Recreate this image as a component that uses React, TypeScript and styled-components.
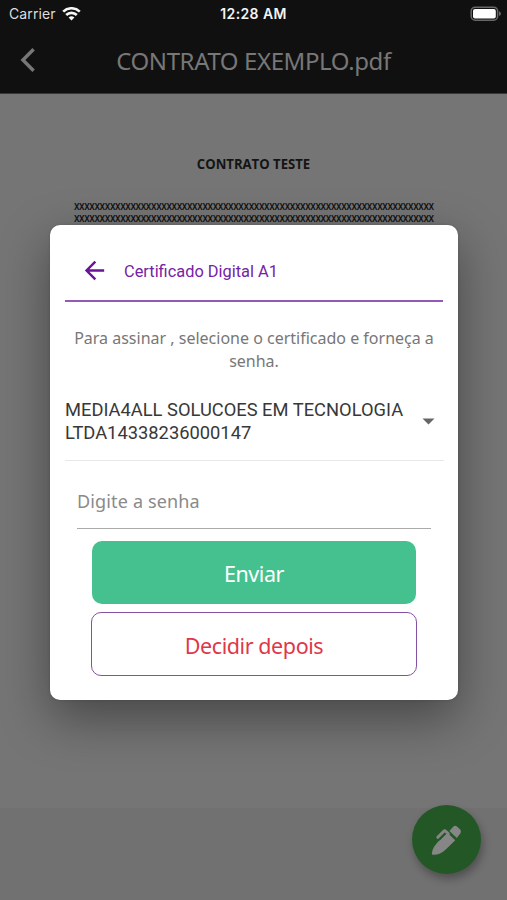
import React from "react";
import styled, { createGlobalStyle } from "styled-components";

const Global = createGlobalStyle`
  * { box-sizing: border-box; }
  body { margin: 0; background: #757575; }
  p, h1, h2 { margin: 0; font-weight: 400; }
  button { font: inherit; padding: 0; border: 0; background: none; }
`;

const humanist = '"Noto Sans", "Open Sans", sans-serif';

const Screen = styled.div`
  position: relative;
  width: 507px;
  height: 900px;
  overflow: hidden;
  display: flex;
  flex-direction: column;
  background: #757575;
  font-family: ${humanist};
`;

const TopBar = styled.header`
  flex: none;
  height: 94px;
  background: #101010;
  border-bottom: 1px solid #383838;
`;

const StatusBar = styled.div`
  display: grid;
  grid-template-columns: 1fr auto 1fr;
  align-items: center;
  height: 28px;
  padding: 0 6px 0 9px;
  color: #f4f4f4;
  font: 400 14px/28px Inter, sans-serif;
`;

const Carrier = styled.div`
  display: flex;
  align-items: center;
  gap: 6px;
  color: #dedede;
  letter-spacing: 0.1px;
`;

const Clock = styled.div`
  margin-right: 3px;
  font-weight: 600;
  font-size: 14px;
  letter-spacing: 0.4px;
`;

const BatterySlot = styled.div`
  display: flex;
  justify-content: flex-end;
`;

const NavBar = styled.div`
  display: grid;
  grid-template-columns: 60px 1fr 60px;
  align-items: center;
  height: 64px;
`;

const BackButton = styled.button`
  display: flex;
  padding-left: 18px;
  color: #777;
`;

const NavTitle = styled.h1`
  padding-top: 2px;
  color: #777;
  font-size: 24px;
  line-height: 34px;
  letter-spacing: -0.4px;
  text-align: center;
  white-space: nowrap;
`;

const Page = styled.main`
  flex: none;
  height: 714px;
  padding-top: 61px;
  text-align: center;
  color: #141414;
`;

const DocTitle = styled.h2`
  font: 700 14px/18px "Open Sans", sans-serif;
  transform: scaleX(0.937);
`;

const Filler = styled.p`
  width: 453px;
  margin: 27px auto 0;
  padding-left: 2px;
  font: 600 12.5px/12px "Open Sans", sans-serif;
  letter-spacing: -0.46px;
  text-align: left;
  word-break: break-all;
  transform: scaleX(0.8);
`;

const Below = styled.div`
  flex: 1;
  background: #717171;
`;

const Fab = styled.button`
  position: absolute;
  left: 412px;
  top: 805px;
  width: 69px;
  height: 69px;
  border-radius: 50%;
  display: grid;
  place-items: center;
  background: #235826;
  color: #868686;
  box-shadow: 2px 5px 9px rgba(0, 0, 0, 0.3);
`;

const Dialog = styled.section`
  position: absolute;
  left: 50px;
  top: 225px;
  width: 408px;
  height: 475px;
  padding: 0 15px;
  border-radius: 10px;
  background: #fff;
  box-shadow: 0 18px 50px rgba(0, 0, 0, 0.4), 0 0 3px rgba(0, 0, 0, 0.15);
`;

const DialogHead = styled.div`
  display: flex;
  align-items: center;
  gap: 15px;
  height: 77px;
  padding: 16px 0 0 14.5px;
  border-bottom: 2px solid #9359b7;
  color: #7423a4;
`;

const DialogTitle = styled.h2`
  font: 400 17px/24px Roboto, sans-serif;
  transform: scaleX(0.963);
  transform-origin: left;
`;

const Hint = styled.p`
  padding-top: 25px;
  color: #777;
  font-size: 16px;
  line-height: 23px;
  text-align: center;
`;

const Select = styled.div`
  display: flex;
  align-items: center;
  justify-content: space-between;
  height: 88px;
  margin-right: -1px;
  border-bottom: 1px solid #e8e8e8;
  color: #383838;
  font: 400 19px/23px Roboto, sans-serif;
`;

const SelectValue = styled.div`
  width: 340px;
  padding-top: 8px;
  white-space: nowrap;
  transform: scaleX(0.964);
  transform-origin: left;
`;

const Caret = styled.svg`
  margin: 10px 9px 0 0;
`;

const Field = styled.div`
  height: 68px;
  margin: 0 12px;
  padding-top: 27px;
  border-bottom: 1px solid #aaa;
  color: #8a8a8a;
  font-size: 18px;
  line-height: 26px;
  letter-spacing: 0.15px;
`;

const Actions = styled.div`
  display: flex;
  flex-direction: column;
  gap: 8px;
  padding: 12px 26px 0;
`;

const Action = styled.button<{ $primary?: boolean }>`
  height: ${(p) => (p.$primary ? "63px" : "64px")};
  margin: 0 ${(p) => (p.$primary ? "1px" : "0")};
  padding-top: 2px;
  border-radius: 10px;
  border: ${(p) => (p.$primary ? "0" : "1.5px solid #8252a0")};
  background: ${(p) => (p.$primary ? "#45c18f" : "#fff")};
  color: ${(p) => (p.$primary ? "#fff" : "#e0374b")};
  font-size: 21.5px;
  letter-spacing: -0.42px;
`;

export default function App() {
  return (
    <Screen>
      <Global />
      <TopBar>
        <StatusBar>
          <Carrier>
            Carrier
            <svg width="19" height="14" viewBox="0 0 19 14" fill="none" stroke="#f6f6f6" strokeWidth="2.6">
              <path d="M1.2 4.6a12 12 0 0 1 16.6 0M4.2 8a7.6 7.6 0 0 1 10.6 0" />
              <path d="M9.5 13.6 6.6 10.6a4.2 4.2 0 0 1 5.8 0Z" fill="#f6f6f6" stroke="none" />
            </svg>
          </Carrier>
          <Clock>12:28 AM</Clock>
          <BatterySlot>
            <svg width="31" height="16" viewBox="0 0 31 16">
              <rect x="1.2" y="1.2" width="26.4" height="13" rx="4" fill="none" stroke="#686868" strokeWidth="1.5" />
              <rect x="3" y="3" width="22.8" height="9.4" rx="2" fill="#fff" />
              <path d="M29 5.3q2 1 2 2.4t-2 2.4Z" fill="#686868" />
            </svg>
          </BatterySlot>
        </StatusBar>
        <NavBar>
          <BackButton aria-label="Voltar">
            <svg width="20" height="28" viewBox="0 0 20 28" fill="none" stroke="currentColor" strokeWidth="3.4">
              <path d="M15.6 3.2 4.9 14l10.7 10.8" />
            </svg>
          </BackButton>
          <NavTitle>CONTRATO EXEMPLO.pdf</NavTitle>
        </NavBar>
      </TopBar>
      <Page>
        <DocTitle>CONTRATO TESTE</DocTitle>
        <Filler>{"x".repeat(140)}</Filler>
      </Page>
      <Below />
      <Fab aria-label="Assinar">
        <svg width="32" height="32" viewBox="0 0 32 32" fill="currentColor">
          <path d="M.8 29.5C1.300 24.500 4 21 8.200 16.500L16.200 8.400 24.200 16.200 15 25.300C11 29.300 6.500 31 2 30.800Q.700 30.700.8 29.500Z" />
          <path
            d="M6.800 13.300 12.600 7.500Q13.700 6.400 14.900 7.500L17.300 9.800"
            fill="none"
            stroke="currentColor"
            strokeWidth="3"
            strokeLinecap="round"
          />
          <path d="M8.300 16.500 15 9.700" fill="none" stroke="#235826" strokeWidth="1" />
          <path d="M18.400 7 22 2.900Q23.700 1.200 25.600 2.300L29.200 5.600Q30.600 7.400 29.400 9.300L25.800 14.100Z" />
        </svg>
      </Fab>
      <Dialog role="dialog">
        <DialogHead>
          <svg width="29" height="29" viewBox="0 0 24 24" fill="#6b1398">
            <path d="M20 11H7.830l5.590-5.590L12 4l-8 8 8 8 1.410-1.410L7.830 13H20v-2z" />
          </svg>
          <DialogTitle>Certificado Digital A1</DialogTitle>
        </DialogHead>
        <Hint>
          Para assinar , selecione o certificado e forneça a<br />
          senha.
        </Hint>
        <Select>
          <SelectValue>
            MEDIA4ALL SOLUCOES EM TECNOLOGIA
            <br />
            LTDA14338236000147
          </SelectValue>
          <Caret width="13" height="7" viewBox="0 0 13 7" fill="#666">
            <path d="M.5.5h12l-6 6z" />
          </Caret>
        </Select>
        <Field>Digite a senha</Field>
        <Actions>
          <Action $primary>Enviar</Action>
          <Action>Decidir depois</Action>
        </Actions>
      </Dialog>
    </Screen>
  );
}
